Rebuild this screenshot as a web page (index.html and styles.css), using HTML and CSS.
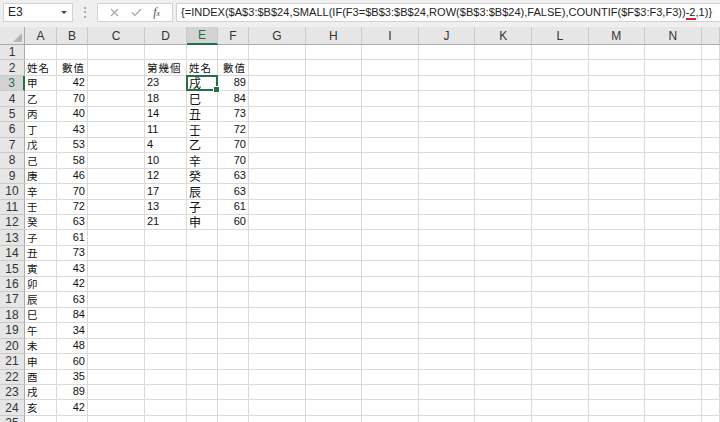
FILE: index.html
```html
<!DOCTYPE html>
<html lang="zh-Hant">
<head>
  <meta charset="UTF-8" />
  <title>INDEX SMALL</title>
  <link rel="stylesheet" href="styles.css">
</head>
<body>
  <div class="toolbar">
    <div class="namebox">E3<span class="arrow"></span></div>
    <div class="dots">⋮</div>
    <div class="fxbox">
      <svg class="ico" width="9" height="9" viewBox="0 0 9 9"><path d="M1 1L8 8M8 1L1 8" stroke="#a6a6a6" stroke-width="1.1" fill="none"/></svg>
      <svg class="ico" width="11" height="9" viewBox="0 0 11 9"><path d="M1 4.5L4 7.5L10 1" stroke="#a6a6a6" stroke-width="1.2" fill="none"/></svg>
      <span class="fx">f<small>x</small></span>
    </div>
    <div class="formula">{=INDEX($A$3:$B$24,SMALL(IF(F3=$B$3:$B$24,ROW($B$3:$B$24),FALSE),COUNTIF($F$3:F3,F3))<span class="err">-2</span>,1)}</div>
  </div>

  <div class="sheet" id="sheet"></div>

  <script>
    var cols = ["A","B","C","D","E","F","G","H","I","J","K","L","M","N",""];
    var names = "甲乙丙丁戊己庚辛壬癸子丑寅卯辰巳午未申酉戌亥".split("");
    var vals = [42,70,40,43,53,58,46,70,72,63,61,73,43,42,63,84,34,48,60,35,89,42];
    var rank = [23,18,14,11,4,10,12,17,13,21];
    var tops = "戌巳丑壬乙辛癸辰子申".split("");
    var topVals = [89,84,73,72,70,70,63,63,61,60];

    var sheet = document.getElementById("sheet");

    function add(cls, text) {
      var d = document.createElement("div");
      d.className = cls;
      if (text !== undefined) d.textContent = text;
      sheet.appendChild(d);
      return d;
    }

    // header row
    add("corner");
    cols.forEach(function (c) {
      add("colhead" + (c === "E" ? " active" : ""), c);
    });

    for (var r = 1; r <= 25; r++) {
      add("rowhead" + (r === 3 ? " active" : ""), r);
      for (var c = 0; c < cols.length; c++) {
        var cls = "cell", txt = "";
        if (r === 2) {
          if (c === 0) { cls += " cjk"; txt = "姓名"; }
          if (c === 1) { cls += " cjk right"; txt = "數值"; }
          if (c === 3) { cls += " cjk"; txt = "第幾個"; }
          if (c === 4) { cls += " cjk"; txt = "姓名"; }
          if (c === 5) { cls += " cjk right"; txt = "數值"; }
        }
        if (r >= 3 && r <= 24) {
          if (c === 0) { cls += " cjk"; txt = names[r - 3]; }
          if (c === 1) { cls += " right"; txt = vals[r - 3]; }
        }
        if (r >= 3 && r <= 12) {
          if (c === 3) { txt = rank[r - 3]; }
          if (c === 4) { cls += " big"; txt = tops[r - 3]; }
          if (c === 5) { cls += " right"; txt = topVals[r - 3]; }
        }
        if (r === 3 && c === 4) cls += " sel";
        add(cls, txt);
      }
    }
  </script>
</body>
</html>
```

FILE: styles.css
```css
body {
  margin: 0;
  background: #fff;
  font-family: "Liberation Sans", Arial, sans-serif;
  overflow: hidden;
}
.toolbar {
  display: flex;
  align-items: flex-start;
  height: 27px;
  padding: 3px 0 0 3px;
  box-sizing: border-box;
  background: #efefef;
}
.namebox {
  position: relative;
  width: 70px;
  height: 19px;
  box-sizing: border-box;
  background: #fff;
  border: 1px solid #d2d2d2;
  font-size: 12px;
  line-height: 17px;
  padding-left: 4px;
  color: #222;
}
.arrow {
  position: absolute;
  right: 5px;
  top: 7px;
  border-left: 3px solid transparent;
  border-right: 3px solid transparent;
  border-top: 3px solid #444;
}
.dots {
  width: 24px;
  text-align: center;
  color: #8a8a8a;
  font-size: 12px;
  line-height: 19px;
}
.fxbox {
  display: flex;
  align-items: center;
  justify-content: space-around;
  width: 76px;
  height: 19px;
  box-sizing: border-box;
  background: #fff;
  border: 1px solid #d2d2d2;
  padding: 0 6px;
}
.fx {
  font-family: "Liberation Serif", serif;
  font-style: italic;
  font-size: 12px;
  color: #555;
}
.fx small {
  font-size: 8px;
}
.formula {
  flex: 1;
  margin-left: 3px;
  height: 19px;
  box-sizing: border-box;
  background: #fff;
  border: 1px solid #d2d2d2;
  border-right: none;
  font-size: 11.05px;
  line-height: 17px;
  padding-left: 4px;
  white-space: nowrap;
  overflow: hidden;
  color: #222;
}
.err {
  border-bottom: 2px solid #e02020;
}

.sheet {
  display: grid;
  grid-template-columns: 25px 32px 31px 57px 42px 31px 31px repeat(8, 56.6px) 1fr;
  grid-template-rows: 18px repeat(25, 15.46px);
}
.corner {
  background: #e6e6e6;
  border-right: 1px solid #ababab;
  border-bottom: 1px solid #ababab;
  position: relative;
}
.corner::after {
  content: "";
  position: absolute;
  right: 2px;
  bottom: 2px;
  border-left: 9px solid transparent;
  border-bottom: 9px solid #b4b4b4;
}
.colhead,
.rowhead {
  display: flex;
  align-items: center;
  justify-content: center;
  box-sizing: border-box;
  background: #e6e6e6;
  color: #333;
  font-size: 12px;
}
.colhead {
  border-right: 1px solid #cacaca;
  border-bottom: 1px solid #ababab;
}
.rowhead {
  border-right: 1px solid #ababab;
  border-bottom: 1px solid #cacaca;
}
.colhead.active {
  background: #d3d3d3;
  color: #217346;
  border-bottom: 2px solid #217346;
}
.rowhead.active {
  background: #d3d3d3;
  color: #217346;
  border-right: 2px solid #217346;
}
.cell {
  display: flex;
  align-items: flex-end;
  box-sizing: border-box;
  border-right: 1px solid #dadada;
  border-bottom: 1px solid #dadada;
  padding: 0 2px 1px 2px;
  font-size: 11px;
  line-height: 13px;
  color: #111;
  white-space: nowrap;
}
.cell.right {
  justify-content: flex-end;
}
.cell.cjk {
  font-family: "Noto Sans CJK TC", "Liberation Sans", sans-serif;
  font-size: 10.5px;
  letter-spacing: 1px;
}
.cell.big {
  font-family: "Noto Sans CJK TC", sans-serif;
  font-size: 12px;
  line-height: 14px;
  padding-bottom: 0;
}
.cell.sel {
  position: relative;
}
.cell.sel::before {
  content: "";
  position: absolute;
  left: -1px;
  top: -1px;
  right: -1px;
  bottom: -1px;
  border: 2px solid #217346;
}
.cell.sel::after {
  content: "";
  position: absolute;
  right: -3px;
  bottom: -3px;
  width: 5px;
  height: 5px;
  background: #217346;
  border: 1px solid #fff;
}
```
